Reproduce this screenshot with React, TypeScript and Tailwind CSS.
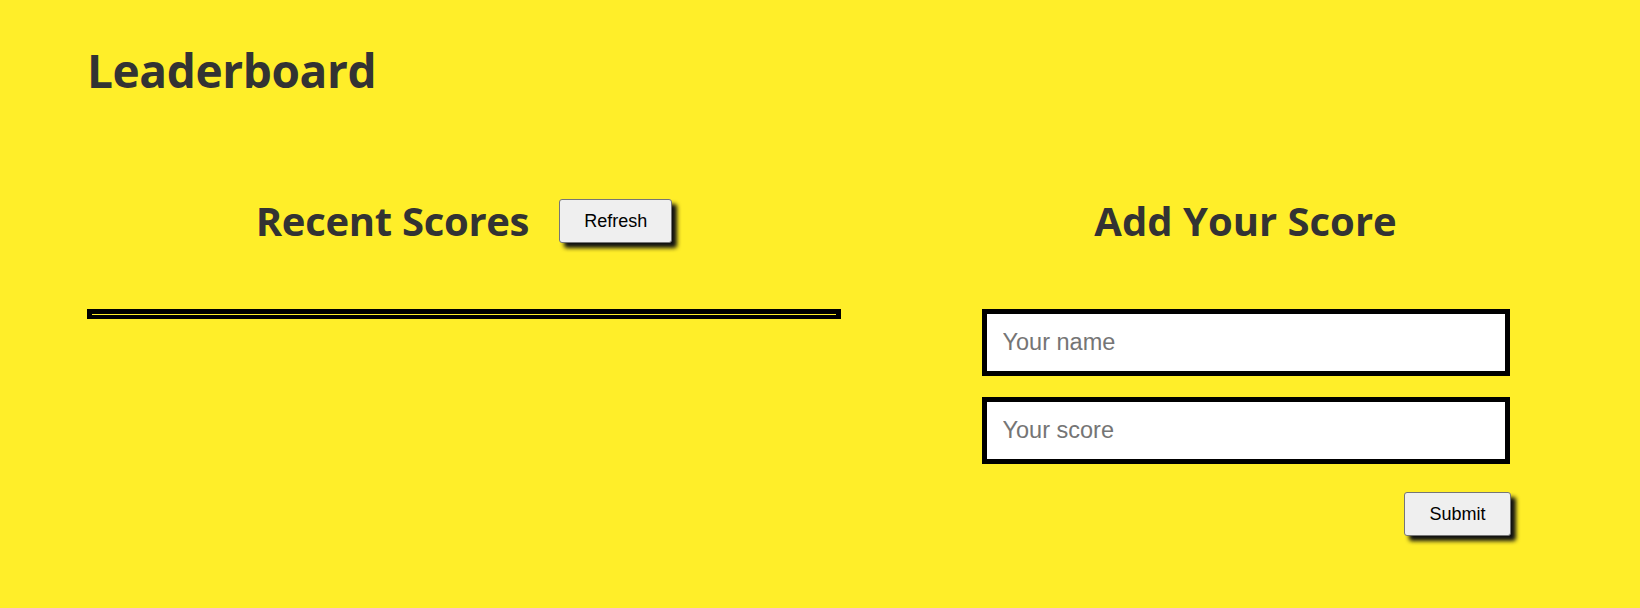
import React from "react";

const headFont = { fontFamily: '"Open Sans", "Noto Sans", sans-serif' };

function Btn({ children }: { children: React.ReactNode }) {
  return (
    <button
      type="button"
      className="h-[44px] px-[24px] bg-[#efefef] border border-[#767676] rounded-[3px] text-[18px] leading-[21px] text-black shadow-[5px_5px_4px_#111111] font-['Liberation_Sans',Arial,sans-serif]"
    >
      {children}
    </button>
  );
}

export default function App() {
  return (
    <div className="min-h-screen w-full bg-[#ffee29] pl-[87px] pb-[40px]">
      <h1
        style={headFont}
        className="pt-[46px] text-[46px] leading-[48px] font-bold tracking-[-0.4px] text-[#333333]"
      >
        Leaderboard
      </h1>
      <div className="flex mt-[105px]">
        <section className="w-[754px] flex flex-col items-center">
          <div className="flex items-center gap-[30px] h-[44px]">
            <h2
              style={headFont}
              className="text-[40px] leading-[44px] font-bold tracking-[-0.3px] text-[#333333]"
            >
              Recent Scores
            </h2>
            <Btn>Refresh</Btn>
          </div>
          <div className="mt-[66px] w-full h-[10px] border-x-[5px] border-t-[5px] border-b-[4px] border-black bg-[#ffee29]" />
        </section>
        <section className="flex-1 ml-[10px] flex flex-col items-center">
          <div className="flex items-center h-[44px]">
            <h2
              style={headFont}
              className="text-[40px] leading-[44px] font-bold text-[#333333]"
            >
              Add Your Score
            </h2>
          </div>
          <form className="mt-[66px] w-[528px] flex flex-col gap-[21px]">
            <input
              type="text"
              placeholder="Your name"
              className="h-[67px] w-full border-[5px] border-black bg-white px-[16px] text-[23.5px] text-black placeholder:text-[#757575] outline-none font-['Liberation_Sans',Arial,sans-serif]"
            />
            <input
              type="text"
              placeholder="Your score"
              className="h-[67px] w-full border-[5px] border-black bg-white px-[16px] text-[23.5px] text-black placeholder:text-[#757575] outline-none font-['Liberation_Sans',Arial,sans-serif]"
            />
            <div className="flex justify-end mt-[7px] -mr-[1px]">
              <Btn>Submit</Btn>
            </div>
          </form>
        </section>
      </div>
    </div>
  );
}
